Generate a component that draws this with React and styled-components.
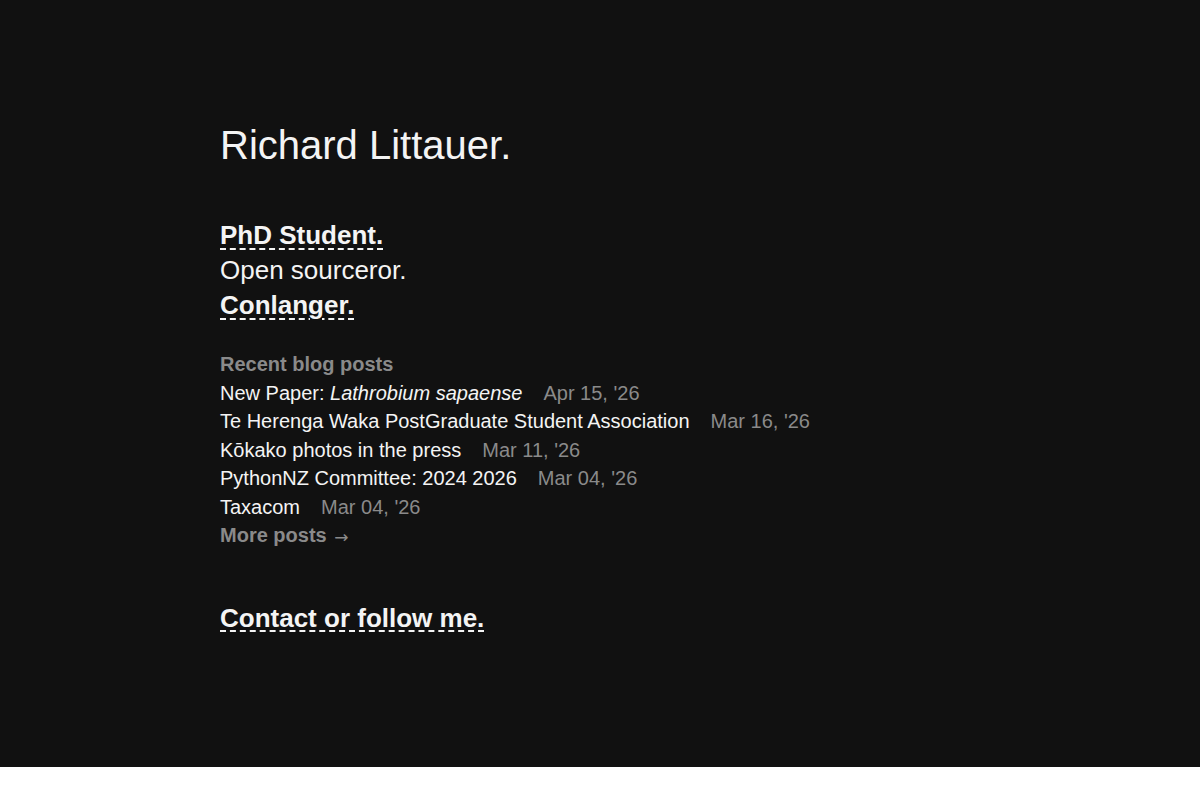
import React from "react";
import styled, { createGlobalStyle } from "styled-components";

const posts = [
  { title: ["New Paper: ", <em key="i">Lathrobium sapaense</em>], date: "Apr 15, '26" },
  { title: "Te Herenga Waka PostGraduate Student Association", date: "Mar 16, '26" },
  { title: "Kōkako photos in the press", date: "Mar 11, '26" },
  { title: "PythonNZ Committee: 2024 2026", date: "Mar 04, '26" },
  { title: "Taxacom", date: "Mar 04, '26" },
];

function App() {
  return (
    <Page>
      <GlobalStyle />
      <Title>Richard Littauer.</Title>

      <Roles>
        <RoleLink href="#">PhD Student.</RoleLink>
        <Role>Open sourceror.</Role>
        <RoleLink href="#">Conlanger.</RoleLink>
      </Roles>

      <Blog>
        <BlogHeading>Recent blog posts</BlogHeading>
        {posts.map((post, i) => (
          <Post key={i}>
            <PostTitle href="#">{post.title}</PostTitle>
            <PostDate>{post.date}</PostDate>
          </Post>
        ))}
        <MorePosts href="#">
          More posts <Arrow>→</Arrow>
        </MorePosts>
      </Blog>

      <Contact href="#">Contact or follow me.</Contact>
    </Page>
  );
}

const GlobalStyle = createGlobalStyle`
  *, *::before, *::after {
    box-sizing: border-box;
  }

  html, body {
    margin: 0;
    padding: 0;
    background: #ffffff;
    font-family: "Liberation Sans", Arial, sans-serif;
  }
`;

const Page = styled.main`
  display: flex;
  flex-direction: column;
  align-items: flex-start;
  height: 767px;
  padding: 122px 220px 0;
  background: #111111;
  color: #f4f4f4;
`;

const Title = styled.h1`
  margin: 0;
  font-size: 40px;
  line-height: 46px;
  font-weight: 400;
`;

const Roles = styled.div`
  display: flex;
  flex-direction: column;
  align-items: flex-start;
  margin-top: 50px;
  font-size: 26px;
  line-height: 35px;
`;

const Role = styled.span`
  font-weight: 400;
`;

const RoleLink = styled.a`
  color: #f4f4f4;
  font-weight: 700;
  text-decoration: underline dashed #f4f4f4;
  text-decoration-thickness: 2px;
  text-underline-offset: 4px;
`;

const Blog = styled.section`
  display: flex;
  flex-direction: column;
  align-items: flex-start;
  margin-top: 27px;
  font-size: 20px;
  line-height: 28.5px;
`;

const BlogHeading = styled.h2`
  margin: 0;
  font-size: 20px;
  line-height: 28.5px;
  font-weight: 700;
  color: #8a8a8a;
`;

const Post = styled.div`
  display: flex;
  gap: 21px;
`;

const PostTitle = styled.a`
  color: #f4f4f4;
  text-decoration: none;

  em {
    font-style: italic;
  }
`;

const PostDate = styled.span`
  color: #8a8a8a;
`;

const MorePosts = styled.a`
  color: #8a8a8a;
  font-weight: 700;
  text-decoration: none;
`;

const Arrow = styled.span`
  margin-left: 2px;
  font-size: 17px;
  font-weight: 400;
  font-family: "DejaVu Sans", sans-serif;
  position: relative;
  top: 1px;
`;

const Contact = styled(RoleLink)`
  margin-top: 50px;
  font-size: 26px;
  line-height: 35px;
`;

export default App;
